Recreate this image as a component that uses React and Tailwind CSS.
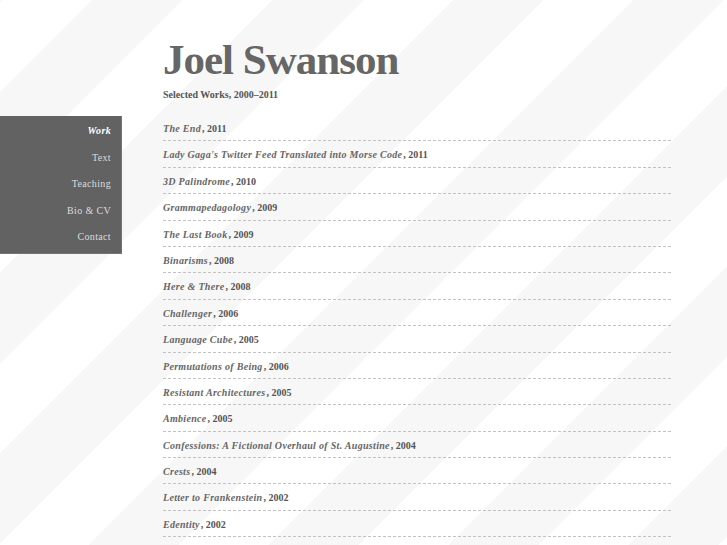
const works = [
  { title: 'The End', year: 2011 },
  { title: "Lady Gaga's Twitter Feed Translated into Morse Code", year: 2011 },
  { title: '3D Palindrome', year: 2010 },
  { title: 'Grammapedagology', year: 2009 },
  { title: 'The Last Book', year: 2009 },
  { title: 'Binarisms', year: 2008 },
  { title: 'Here & There', year: 2008 },
  { title: 'Challenger', year: 2006 },
  { title: 'Language Cube', year: 2005 },
  { title: 'Permutations of Being', year: 2006 },
  { title: 'Resistant Architectures', year: 2005 },
  { title: 'Ambience', year: 2005 },
  { title: 'Confessions: A Fictional Overhaul of St. Augustine', year: 2004 },
  { title: 'Crests', year: 2004 },
  { title: 'Letter to Frankenstein', year: 2002 },
  { title: 'Edentity', year: 2002 },
];

const nav = ['Work', 'Text', 'Teaching', 'Bio & CV', 'Contact'];

const Sidebar = ({ active = 'Work' }) => (
  <nav className="w-[122px] shrink-0 self-start bg-[#626262] border-r border-b border-[#747474] py-[2px] pr-[10px] text-right">
    {nav.map((item) => (
      <a
        key={item}
        href="#"
        className={`block leading-[26.5px] text-[10px] tracking-[0.35px] ${
          item === active ? 'italic font-bold text-white' : 'text-[#dcdcdc]'
        }`}
      >
        {item}
      </a>
    ))}
  </nav>
);

const WorkRow = ({ title, year }) => (
  <li className="pt-[6px] pb-[6.4px] leading-[13px] text-[10px] border-b border-transparent bg-[repeating-linear-gradient(to_right,#c2c2c2_0_3px,transparent_3px_5px)] bg-no-repeat bg-bottom bg-[length:100%_1px]">
    <a href="#" className="italic font-bold text-[#666] tracking-[0.3px] pr-px">
      {title}
    </a>
    <span className="font-bold text-[#555]">, {year}</span>
  </li>
);

export default function App() {
  return (
    <div
      className="min-h-screen bg-white bg-[repeating-linear-gradient(135deg,#f7f7f7_0_2.12px,#fff_2.12px_65.76px,#f7f7f7_65.76px_127.28px)]"
      style={{ fontFamily: '"Liberation Serif", "Times New Roman", serif' }}
    >
      <header className="pl-[163px] pt-[38px]">
        <h1 className="text-[43px] leading-none font-bold tracking-[-1px] text-[#666]">Joel Swanson</h1>
        <p className="mt-[7px] text-[10px] leading-[13px] font-bold text-[#555]">Selected Works, 2000–2011</p>
      </header>

      <div className="flex mt-[15px]">
        <Sidebar />
        <main className="ml-[41px] w-[509px]">
          <ul>
            {works.map((w) => (
              <WorkRow key={w.title} {...w} />
            ))}
          </ul>
        </main>
      </div>
    </div>
  );
}
